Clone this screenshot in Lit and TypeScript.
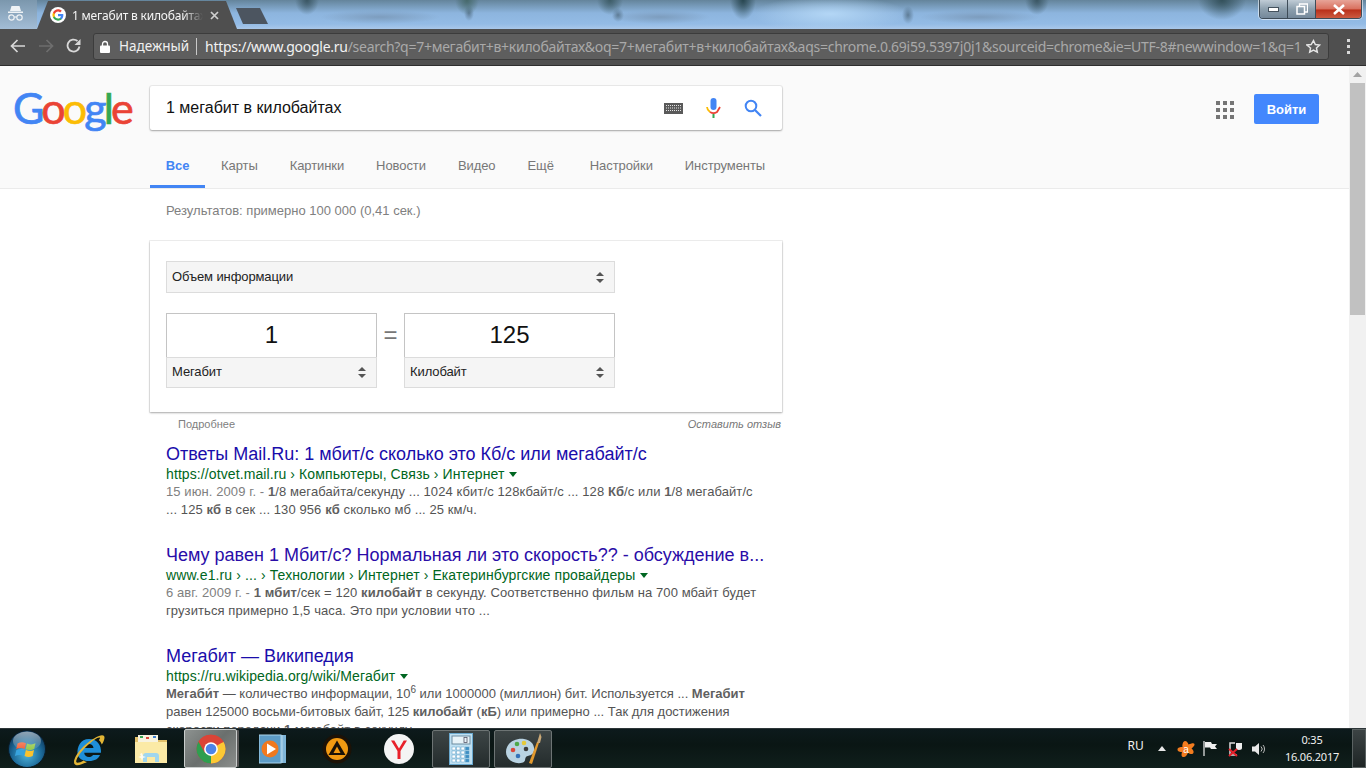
import { LitElement, css, html, svg } from 'lit';
import { customElement } from 'lit/decorators.js';

const updown = html`<svg class="updown" width="10" height="13" viewBox="0 0 10 13"><path d="M5 1 9 5H1zM1 8h8l-4 4z" fill="#555"/></svg>`;
const arrow = html`<span class="drop"></span>`;

const gIcon = html`<svg width="16" height="16" viewBox="0 0 48 48">
  <circle cx="24" cy="24" r="24" fill="#fff"/>
  <path d="M40 24.5c0-1.2-.1-2.3-.3-3.4H24v6.5h9a7.700 7.700 0 0 1-3.300 5v4.200h5.400c3.100-2.900 4.900-7.100 4.900-12.300z" fill="#4285f4"/>
  <path d="M24 41c4.500 0 8.300-1.500 11.100-4.000l-5.400-4.200c-1.500 1-3.400 1.600-5.700 1.600-4.400 0-8.100-3-9.400-6.900H9v4.300C11.800 37 17.400 41 24 41z" fill="#34a853"/>
  <path d="M14.600 27.500a10 10 0 0 1 0-6.500v-4.300H9a17 17 0 0 0 0 15.100z" fill="#fbbc05"/>
  <path d="M24 13.700c2.500 0 4.700.9 6.500 2.500l4.800-4.800C32.300 8.700 28.500 7 24 7c-6.600 0-12.200 4-15 9.700l5.600 4.300c1.300-4 5-7.300 9.400-7.300z" fill="#ea4335"/>
</svg>`;

const chromeIcon = (size: number) => html`<svg width=${size} height=${size} viewBox="0 0 48 48">
  <circle cx="24" cy="24" r="23" fill="#db4437"/>
  <path d="M24 24 44 12.500A23 23 0 0 1 24 47z" fill="#fcc934"/>
  <path d="M24 24 24 47A23 23 0 0 1 4 12.500z" fill="#2e9e4f"/>
  <path d="M24 13H44A23 23 0 0 0 4 12.500L14 30z" fill="#db4437"/>
  <circle cx="24" cy="24" r="11" fill="#fff"/>
  <circle cx="24" cy="24" r="8.500" fill="#4d84e8"/>
</svg>`;

const orb = html`<svg width="38" height="38" viewBox="0 0 38 38">
  <defs>
    <radialGradient id="orbg" cx="50%" cy="65%" r="60%"><stop offset="0" stop-color="#4fb4dc"/><stop offset=".65" stop-color="#1c6a99"/><stop offset="1" stop-color="#0d3a5e"/></radialGradient>
    <linearGradient id="orbs" x1="0" y1="0" x2="0" y2="1"><stop offset="0" stop-color="#fff" stop-opacity=".55"/><stop offset="1" stop-color="#fff" stop-opacity=".05"/></linearGradient>
  </defs>
  <circle cx="19" cy="19" r="18.500" fill="url(#orbg)" stroke="#0a1c28"/>
  <path d="M9.500 13.500c3-1.500 5.500-1.500 8.500-.3l-1.300 5.800c-3-1.200-5.500-1.200-8.500.2z" fill="#f0572c"/>
  <path d="M19 13.500c3 1.200 5.500 1.200 8.500-.2l-1.300 5.800c-3 1.400-5.500 1.300-8.500.2z" fill="#8ec63f"/>
  <path d="M8.400 20c3-1.400 5.500-1.400 8.400-.2l-1.300 6c-3-1.200-5.600-1.200-8.600.2z" fill="#38a3dd"/>
  <path d="M17.900 20.100c3 1.100 5.500 1.200 8.100-.1l-1.300 6c-2.700 1.300-5.200 1.300-8.100.1z" fill="#fcc22d"/>
  <ellipse cx="19" cy="11" rx="14" ry="9.500" fill="url(#orbs)"/>
</svg>`;

const ie = html`<svg width="34" height="36" viewBox="0 0 34 36">
  <path d="M17 8C8.500 8 5 16 5.500 22.500c.4 5 5 7.500 11.500 7.500 6 0 9.500-2.300 11-6h-7c-1 1.400-2.500 2-4 2-2.700 0-4.700-1.700-4.800-4.200H29c.5-8-4-13.800-12-13.800zm-4.800 9c.3-2.300 2.300-3.900 4.700-3.900 2.500 0 4.400 1.600 4.600 3.900z" fill="#1f8fd8"/>
  <path d="M2.500 33C-.5 28 12 11 27 5c3-1.200 5.500-1 5.500 1.500 0 2-1 4.500-2.700 7-.7-2-1.500-3-3-4.500 1-1 1.500-2 1-2.500C25 5 8 19 4.500 29c-.6 1.700-.4 2.600 1 2.700 1.600 0 4-1 6-2.300 1 .7 2 1.200 3.500 1.500C9 34 4.500 35.500 2.500 33z" fill="#e2b535"/>
</svg>`;

const folder = html`<svg width="34" height="32" viewBox="0 0 34 32">
  <path d="M1 4h13l2 3h17v22H1z" fill="#e2c06a"/>
  <rect x="4" y="2" width="20" height="8" fill="#f7f3e0"/>
  <rect x="6" y="3" width="3" height="2" fill="#3aa655"/><rect x="12" y="4" width="3" height="2" fill="#d9483b"/><rect x="19" y="3" width="3" height="2" fill="#3f7fd0"/>
  <path d="M1 9h32v21H1z" fill="#fbeaa6"/>
  <path d="M9 29v-6c0-2 1-3 3-3h10c2 0 3 1 3 3v6h-4v-5h-8v5z" fill="#9fd6ee"/>
  <path d="M6 21l2-1 1 3 3 1-3 1-1 3-1-3-3-1 3-1z" fill="#fff" opacity=".8"/>
</svg>`;

const wmp = html`<svg width="28" height="32" viewBox="0 0 28 32">
  <rect x="6" y="2" width="21" height="28" fill="#7fb5d8"/>
  <rect x="3" y="2" width="21" height="28" fill="#9cc7e2"/>
  <rect x="0" y="2" width="22" height="28" fill="#5d9cc7" stroke="#a9d3ec"/>
  <circle cx="11" cy="16" r="8.500" fill="#f0791f"/>
  <path d="M8 10.500 17 16l-9 5.500z" fill="#fff"/>
</svg>`;

const aimp = html`<svg width="30" height="30" viewBox="0 0 30 30">
  <circle cx="15" cy="15" r="14.500" fill="#1d1206"/>
  <circle cx="15" cy="15" r="11" fill="#f29a12"/>
  <path d="M15 6.500 23.500 21h-17z" fill="#1a1208"/>
  <path d="M15 12.500 18.500 19h-7z" fill="#f29a12"/>
</svg>`;

const yandex = html`<svg width="30" height="30" viewBox="0 0 30 30">
  <circle cx="15" cy="15" r="15" fill="#f4f4f4"/>
  <path d="M13.500 25V17L7 6.500h3.300L15 14.500l4.700-8H23L16.500 17v8z" fill="#e8202a"/>
</svg>`;

const calc = html`<svg width="24" height="32" viewBox="0 0 24 32">
  <rect x=".5" y=".5" width="23" height="31" fill="#bfe0f2" stroke="#6aa9cf"/>
  <rect x="3" y="3" width="18" height="8" fill="#e8f3f8" stroke="#6d8ca0"/>
  <rect x="15" y="4.500" width="3" height="5" fill="none" stroke="#556" stroke-width=".8"/>
  ${[14, 18, 22, 26].map(y => [3, 7.500, 12, 16.500].map(x => svg`<rect x=${x} y=${y} width="3.500" height="3" fill=${x === 16.5 ? '#3d8fc4' : '#fff'} stroke="#5e9fc8" stroke-width=".5"/>`))}
</svg>`;

const palette = html`<svg width="38" height="34" viewBox="0 0 38 34">
  <path d="M2 20C2 11 11 6 20 7c7 .8 11 6 10 12-.8 5-6 4-8 6-1.500 2 0 4-3 5.500C11 33 2 28 2 20z" fill="#b9d3e2"/>
  <circle cx="9" cy="18" r="2.300" fill="#d9483b"/><circle cx="13" cy="12" r="2.300" fill="#4ea84a"/><circle cx="20" cy="11" r="2.300" fill="#e5c93a"/><circle cx="14" cy="24" r="2.300" fill="#3572b8"/><circle cx="22" cy="17" r="2.300" fill="#3c3c3c"/>
  <path d="M25 31 33 10l2 .8L28 32z" fill="#e39a2f"/>
  <path d="M33 11 36 1l1.500 4-1.500 6z" fill="#c9a877"/>
</svg>`;

const avast = html`<svg width="18" height="18" viewBox="0 0 18 18">
  <path d="M8 1c2 0 3 2 3.500 3.500C14 3.500 17 2.500 17.500 4c.4 1.500-1.500 3-3 4.500 1.500 1 3 3.500 1.500 5-1.500 1.300-3.500 0-5-.8C10 15 8.500 17.500 6 17c-2-.5-1.500-3-1-5C3 12 .5 11.500.5 9.500S3.500 7 5.500 7C5 5 6 1 8 1z" fill="#f37c1f"/>
  <text x="6.200" y="12.500" font-size="10" font-family="Liberation Sans, sans-serif" fill="#fff">a</text>
</svg>`;

@customElement('app-root')
export class AppRoot extends LitElement {
  static styles = css`
    :host {
      display: flex;
      flex-direction: column;
      width: 1366px;
      height: 768px;
      overflow: hidden;
      font-family: 'Liberation Sans', Arial, sans-serif;
      background: #fff;
    }

    /* window strip, blurred desktop behind it */
    .strip {
      height: 29px;
      flex: none;
      display: flex;
      background:
        radial-gradient(ellipse 12px 15px at 307px 0, #3a5663 0, transparent 100%),
        radial-gradient(ellipse 12px 15px at 467px 0, #46696b 0, transparent 100%),
        radial-gradient(ellipse 5px 8px at 469px 13px, rgba(74, 100, 120, 0.7) 0, transparent 100%),
        radial-gradient(ellipse 13px 15px at 610px 0, #3d5c67 0, transparent 100%),
        radial-gradient(ellipse 6px 7px at 618px 15px, rgba(74, 100, 120, 0.7) 0, transparent 100%),
        radial-gradient(ellipse 13px 20px at 743px 0, #284650 0, transparent 100%),
        radial-gradient(ellipse 6px 9px at 908px 15px, rgba(74, 100, 120, 0.7) 0, transparent 100%),
        radial-gradient(ellipse 12px 15px at 1037px 0, #3a5663 0, transparent 100%),
        radial-gradient(ellipse 24px 20px at 1222px 0, #33505a 0, transparent 100%),
        radial-gradient(ellipse 78px 18px at 830px 14px, #b3d6f5 0, transparent 100%),
        radial-gradient(ellipse 60px 7px at 380px 17px, #7d9dbe 0, transparent 100%),
        radial-gradient(ellipse 50px 7px at 660px 17px, #7d9dbe 0, transparent 100%),
        radial-gradient(ellipse 60px 7px at 980px 17px, #7d9dbe 0, transparent 100%),
        linear-gradient(#64849b, #8db5de 45%, #93bbe5 82%, #a9c8ea);
    }
    .incog {
      width: 37px;
      padding: 5px 0 0 7px;
      box-sizing: border-box;
      background: linear-gradient(#7b97ad, #a3bdd6);
    }
    .tab {
      width: 200px;
      height: 28px;
      margin-top: 1px;
      display: flex;
      align-items: center;
      padding-left: 13px;
      box-sizing: border-box;
      background: #4f4f4f;
      clip-path: polygon(11px 0, 189px 0, 200px 100%, 0 100%);
      color: #f4f4f4;
      font-size: 12px;
      font-family: 'Noto Sans', 'Liberation Sans', sans-serif;
    }
    .tab-title {
      width: 131px;
      margin-left: 6px;
      white-space: nowrap;
      overflow: hidden;
      letter-spacing: -0.2px;
      mask-image: linear-gradient(90deg, #000 85%, transparent);
    }
    .tab-x {
      margin-left: 7px;
      display: flex;
    }
    .newtab {
      width: 33px;
      height: 16px;
      margin: 8px 0 0 -1px;
      background: #4c5560;
      clip-path: polygon(0 0, 24px 0, 32px 100%, 7px 100%);
    }
    .winbtns {
      display: flex;
      margin-left: auto;
      margin-right: 4px;
      height: 18px;
      border: 1px solid #3e4c58;
      border-top: 0;
      border-radius: 0 0 4px 4px;
      box-shadow: 0 0 0 1px rgba(255, 255, 255, 0.55);
      overflow: hidden;
    }
    .wb {
      width: 27px;
      display: flex;
      align-items: center;
      justify-content: center;
      background: linear-gradient(#c0ccd6, #8da0ae 50%, #74889a);
      border-right: 1px solid #3e4c58;
    }
    .wb.close {
      width: 45px;
      border: 0;
      background: linear-gradient(#e7a498, #d9705e 50%, #b9301a 55%, #cc5a40);
    }

    /* toolbar */
    .toolbar {
      height: 37px;
      flex: none;
      box-sizing: border-box;
      display: flex;
      align-items: center;
      padding: 0 0 2px 10px;
      background: #4f4f4f;
      border-bottom: 1px solid #2e2e2e;
    }
    .nav {
      width: 28px;
      display: flex;
      justify-content: flex-start;
    }
    .omni {
      width: 1236px;
      height: 27px;
      margin-left: -1px;
      box-sizing: border-box;
      display: flex;
      align-items: center;
      background: #5e5e5e;
      border: 1px solid #3c3c3c;
      border-radius: 3px;
      font-family: 'Noto Sans', 'Liberation Sans', sans-serif;
      font-size: 14px;
      color: #a9a9a9;
    }
    .lock {
      margin: 0 9px 0 6px;
      display: flex;
    }
    .secure {
      width: 68px;
      color: #f0f0f0;
      font-size: 13.500px;
      white-space: nowrap;
    }
    .sep {
      width: 1px;
      height: 17px;
      margin: 0 8px 0 9px;
      background: #c9c9c9;
    }
    .url {
      width: 1097px;
      white-space: nowrap;
      letter-spacing: -0.27px;
    }
    .url b {
      font-weight: 400;
      color: #f2f2f2;
    }
    .star {
      margin-left: 4px;
      display: flex;
    }
    .dots {
      margin-left: 18px;
      display: grid;
      gap: 3px;
    }
    .dots i {
      width: 3px;
      height: 3px;
      background: #d8d8d8;
    }

    /* page */
    .view {
      flex: 1;
      min-height: 0;
      display: flex;
    }
    .page {
      width: 1349px;
      overflow: hidden;
    }
    .scroll {
      width: 17px;
      background: #f1f1f1;
      display: flex;
      flex-direction: column;
      align-items: center;
    }
    .scroll-up {
      height: 17px;
      display: flex;
      align-items: center;
    }
    .thumb {
      width: 15px;
      height: 232px;
      background: #c1c1c1;
    }
    .head {
      height: 123px;
      box-sizing: border-box;
      background: #fafafa;
      border-bottom: 1px solid #ebebeb;
      display: flex;
      flex-direction: column;
    }
    .head-top {
      display: flex;
      padding-top: 20px;
    }
    .logo {
      width: 149px;
      height: 44px;
      flex: none;
      padding-left: 13px;
      box-sizing: border-box;
      font-family: Lato, sans-serif;
      font-size: 43px;
      line-height: 43px;
      letter-spacing: -2.850px;
      white-space: nowrap;
      -webkit-text-stroke: 0.7px currentColor;
    }
    .logo .b { color: #4285f4; }
    .logo .r { color: #ea4335; }
    .logo .y { color: #fbbc05; }
    .logo .g { color: #34a853; }
    .search {
      width: 632px;
      height: 44px;
      margin-left: 1px;
      flex: none;
      box-sizing: border-box;
      display: flex;
      align-items: center;
      padding: 0 20px 0 16px;
      background: #fff;
      border-radius: 2px;
      box-shadow: 0 1px 2px rgba(0, 0, 0, 0.3), 0 0 0 1px rgba(0, 0, 0, 0.06);
      font-size: 16px;
      color: #111;
    }
    .search-text {
      flex: 1;
    }
    .search-icons {
      display: flex;
      align-items: center;
      gap: 23px;
    }
    .apps {
      margin-left: 434px;
      margin-top: 15px;
      display: grid;
      grid-template-columns: repeat(3, 4px);
      gap: 3px;
      height: 18px;
    }
    .apps i {
      width: 4px;
      height: 4px;
      background: #757575;
    }
    .login {
      width: 65px;
      height: 30px;
      margin: 8px 0 0 20px;
      display: flex;
      align-items: center;
      justify-content: center;
      background: #4387fd;
      border-radius: 2px;
      color: #fff;
      font-size: 13px;
      font-weight: 700;
    }
    .tabs {
      display: flex;
      margin: 13px 0 0 150px;
      font-size: 13px;
      letter-spacing: -0.08px;
      color: #777;
    }
    .tabs span {
      padding: 15px 16px 14px;
      height: 16px;
      line-height: 16px;
    }
    .tabs .on {
      width: 55px;
      box-sizing: border-box;
      text-align: center;
      padding: 15px 0 11px;
      color: #4285f4;
      font-weight: 700;
      height: 45px;
      border-bottom: 3px solid #4285f4;
    }
    .tabs .set {
      margin-left: 4px;
    }
    .body {
      padding: 14px 0 0 166px;
    }
    .stats {
      font-size: 13px;
      line-height: 16px;
      color: #808080;
    }
    .card {
      width: 632px;
      height: 171px;
      margin: 22px 0 0 -16px;
      box-sizing: border-box;
      padding: 20px 16px;
      background: #fff;
      box-shadow: 0 1px 2px rgba(0, 0, 0, 0.3), 0 0 0 1px rgba(0, 0, 0, 0.06);
    }
    .sel {
      height: 32px;
      box-sizing: border-box;
      display: flex;
      align-items: center;
      justify-content: space-between;
      padding: 0 9px 0 5px;
      background: #f5f5f5;
      border: 1px solid #dcdcdc;
      font-size: 13px;
      letter-spacing: -0.1px;
      color: #222;
    }
    .main-sel span {
      margin-top: -2px;
    }
    .unit .sel {
      height: 31px;
    }
    .unit .sel span {
      margin-top: -2px;
    }
    .main-sel {
      width: 449px;
    }
    .conv {
      display: flex;
      align-items: center;
      margin-top: 20px;
      width: 449px;
    }
    .unit {
      width: 211px;
    }
    .val {
      height: 44px;
      box-sizing: border-box;
      display: flex;
      align-items: center;
      justify-content: center;
      padding-bottom: 2px;
      border: 1px solid #c4c4c4;
      border-bottom: 0;
      font-size: 24px;
      color: #111;
    }
    .eq {
      width: 27px;
      text-align: center;
      font-size: 24px;
      color: #777;
      margin-bottom: 32px;
    }
    .foot {
      width: 615px;
      display: flex;
      justify-content: space-between;
      padding: 5px 0 0 12px;
      box-sizing: border-box;
      font-size: 11px;
      line-height: 14px;
      color: #808080;
    }
    .foot em {
      color: #777;
    }
    .results {
      padding-top: 13px;
    }
    .res {
      width: 610px;
      height: 101px;
      white-space: nowrap;
    }
    .res h3 {
      margin: 0;
      font-size: 18px;
      font-weight: 400;
      line-height: 21px;
      color: #1a0dab;
    }
    .res h3.seen {
      color: #2a0da8;
    }
    .res .link {
      font-size: 14px;
      line-height: 18px;
      letter-spacing: 0.1px;
      color: #006621;
    }
    .res p {
      margin: 0;
      font-size: 13px;
      line-height: 18px;
      letter-spacing: 0.09px;
      color: #545454;
    }
    .res p.tight {
      letter-spacing: 0;
    }
    .res p b {
      color: #5f5f5f;
    }
    .res p .date {
      color: #808080;
    }
    .res sup {
      font-size: 10px;
      line-height: 0;
    }
    .drop {
      display: inline-block;
      margin: 0 0 2px 1px;
      border-top: 5px solid #006621;
      border-left: 4px solid transparent;
      border-right: 4px solid transparent;
    }

    /* taskbar */
    .taskbar {
      height: 40px;
      flex: none;
      box-sizing: border-box;
      display: flex;
      align-items: center;
      background: linear-gradient(#0d1a1c, #0a1614 40%, #101f1c);
      border-top: 1px solid #2d3538;
      color: #f0f0f0;
    }
    .start {
      width: 58px;
      display: flex;
      justify-content: center;
      padding-right: 4px;
      box-sizing: border-box;
    }
    .ti {
      width: 62px;
      height: 38px;
      display: flex;
      align-items: center;
      justify-content: center;
      flex: none;
      box-sizing: border-box;
    }
    .ti.wmp { width: 60px; }
    .ti.aimp { width: 68px; }
    .ti.ya { width: 56px; margin-right: 5px; }
    .ti.chrome {
      width: 53px;
      height: 39px;
      margin: 0 6px 0 2px;
      background: linear-gradient(135deg, #8d9290, #6a6f6d 50%, #8b8e8c);
      border: 1px solid #c9cdcc;
      border-radius: 2px;
      box-shadow: 3px 0 0 -1px #555;
    }
    .ti.run {
      width: 58px;
      margin-right: 4px;
      background: linear-gradient(#3d4546, #242c2c);
      border: 1px solid #6d7474;
      border-radius: 2px;
    }
    .tray {
      margin-left: auto;
      display: flex;
      align-items: center;
      height: 39px;
      font-family: 'Noto Sans', 'Liberation Sans', sans-serif;
      font-size: 12px;
    }
    .lang {
      width: 22px;
      padding-bottom: 6px;
    }
    .tray-ic {
      width: 24.500px;
      display: flex;
      justify-content: center;
    }
    .clock {
      width: 66px;
      margin-left: 7px;
      text-align: center;
      font-size: 11px;
      letter-spacing: -0.2px;
      line-height: 17px;
      padding-bottom: 1px;
      white-space: nowrap;
    }
    .desk {
      width: 14px;
      height: 39px;
      margin-left: 7px;
      box-sizing: border-box;
      background: linear-gradient(#3c4344, #1e2525);
      border: 1px solid #5a6262;
    }
  `;

  render() {
    return html`
      <div class="strip">
        <div class="incog">
          <svg width="17" height="18" viewBox="0 0 17 18">
            <path d="M4.500 1h8l1.500 5H3zM1 6.500h15V8H1z" fill="#eef2f5"/>
            <g fill="none" stroke="#eef2f5" stroke-width="1.200"><circle cx="4.500" cy="12.500" r="2.700"/><circle cx="12.500" cy="12.500" r="2.700"/><path d="M7.200 12h2.600"/></g>
          </svg>
        </div>
        <div class="tab">
          ${gIcon}
          <span class="tab-title">1 мегабит в килобайтах</span>
          <span class="tab-x"><svg width="9" height="9" viewBox="0 0 9 9"><path d="M1 1l7 7M8 1 1 8" stroke="#cfcfcf" stroke-width="1.700"/></svg></span>
        </div>
        <div class="newtab"></div>
        <div class="winbtns">
          <div class="wb"><svg width="11" height="5" viewBox="0 0 11 5"><rect x=".5" y=".5" width="10" height="4" fill="#fff" stroke="#44525e"/></svg></div>
          <div class="wb"><svg width="12" height="12" viewBox="0 0 12 12"><path d="M3.500 3V1h8v8H9" fill="none" stroke="#fff" stroke-width="1.300"/><rect x="1" y="3.500" width="7.500" height="7.500" fill="none" stroke="#fff" stroke-width="1.500"/></svg></div>
          <div class="wb close"><svg width="14" height="11" viewBox="0 0 14 11"><path d="M2 1l10 9M12 1 2 10" stroke="#fff" stroke-width="2.600"/></svg></div>
        </div>
      </div>
      <div class="toolbar">
        <span class="nav"><svg width="16" height="14" viewBox="0 0 16 14"><path d="M15 7H2M7.500 1 1.500 7l6 6" fill="none" stroke="#d8d8d8" stroke-width="1.700"/></svg></span>
        <span class="nav"><svg width="16" height="14" viewBox="0 0 16 14"><path d="M1 7h13M8.500 1l6 6-6 6" fill="none" stroke="#6e6e6e" stroke-width="1.700"/></svg></span>
        <span class="nav"><svg width="16" height="16" viewBox="0 0 16 16"><path d="M13.500 8.500A6 6 0 1 1 11.500 3" fill="none" stroke="#d8d8d8" stroke-width="1.800"/><path d="M14.500 1v6h-6z" fill="#d8d8d8"/></svg></span>
        <div class="omni">
          <span class="lock"><svg width="10" height="13" viewBox="0 0 10 13"><path d="M2.500 6V4a2.500 2.500 0 0 1 5 0v2" fill="none" stroke="#fff" stroke-width="1.300"/><rect y="5.500" width="10" height="7.500" rx="1" fill="#fff"/></svg></span>
          <span class="secure">Надежный</span>
          <span class="sep"></span>
          <span class="url"><b>https://www.google.ru</b>/search?q=7+мегабит+в+килобайтах&oq=7+мегабит+в+килобайтах&aqs=chrome.0.69i59.5397j0j1&sourceid=chrome&ie=UTF-8#newwindow=1&q=1</span>
          <span class="star"><svg width="15" height="15" viewBox="0 0 24 24"><path d="M12 2.500l2.900 6.300 6.900.8-5.100 4.700 1.400 6.800-6.100-3.400-6.100 3.400 1.400-6.800L1.300 9.600l6.900-.8z" fill="none" stroke="#e6e6e6" stroke-width="2.300"/></svg></span>
        </div>
        <span class="dots"><i></i><i></i><i></i></span>
      </div>
      <div class="view">
        <div class="page">
          <div class="head">
            <div class="head-top">
              <div class="logo"><span class="b">G</span><span class="r">o</span><span class="y">o</span><span class="b">g</span><span class="g">l</span><span class="r">e</span></div>
              <div class="search">
                <span class="search-text">1 мегабит в килобайтах</span>
                <span class="search-icons">
                  <svg width="19" height="11" viewBox="0 0 19 11"><rect width="19" height="11" fill="#5a5a5a"/><path d="M2 2.500h15M2 5h15M2 7.500h15" stroke="#e4e4e4" stroke-dasharray="1 1"/></svg>
                  <svg width="15" height="20" viewBox="0 0 15 20">
                    <rect x="4.500" y="0" width="6" height="12" rx="3" fill="#4285f4"/>
                    <path d="M1 9a6.500 6.500 0 0 0 3 5" fill="none" stroke="#fbbc05" stroke-width="1.800"/>
                    <path d="M4 14a6.500 6.500 0 0 0 7 0l3-5" fill="none" stroke="#ea4335" stroke-width="1.800"/>
                    <rect x="6.500" y="16" width="2" height="4" fill="#34a853"/>
                  </svg>
                  <svg width="18" height="18" viewBox="0 0 18 18"><circle cx="7" cy="7" r="5.300" fill="none" stroke="#4285f4" stroke-width="2"/><path d="M11 11l6 6" stroke="#4285f4" stroke-width="2.200"/></svg>
                </span>
              </div>
              <div class="apps">${[...Array(9)].map(() => html`<i></i>`)}</div>
              <div class="login">Войти</div>
            </div>
            <div class="tabs">
              <span class="on">Все</span>
              <span>Карты</span><span>Картинки</span><span>Новости</span><span>Видео</span><span>Ещё</span>
              <span class="set">Настройки</span><span>Инструменты</span>
            </div>
          </div>
          <div class="body">
            <div class="stats">Результатов: примерно 100 000 (0,41 сек.)</div>
            <div class="card">
              <div class="sel main-sel"><span>Объем информации</span>${updown}</div>
              <div class="conv">
                <div class="unit"><div class="val">1</div><div class="sel"><span>Мегабит</span>${updown}</div></div>
                <div class="eq">=</div>
                <div class="unit"><div class="val">125</div><div class="sel"><span>Килобайт</span>${updown}</div></div>
              </div>
            </div>
            <div class="foot"><span>Подробнее</span><em>Оставить отзыв</em></div>
            <div class="results">
              <div class="res">
                <h3>Ответы Mail.Ru: 1 мбит/с сколько это Кб/с или мегабайт/с</h3>
                <div class="link">https://otvet.mail.ru › Компьютеры, Связь › Интернет ${arrow}</div>
                <p><span class="date">15 июн. 2009 г. - </span><b>1</b>/8 мегабайта/секунду ... 1024 кбит/с 128кбайт/с ... 128 <b>Кб</b>/с или <b>1</b>/8 мегабайт/с<br>... 125 <b>кб</b> в сек ... 130 956 <b>кб</b> сколько мб ... 25 км/ч.</p>
              </div>
              <div class="res">
                <h3 class="seen">Чему равен 1 Мбит/с? Нормальная ли это скорость?? - обсуждение в...</h3>
                <div class="link">www.e1.ru › ... › Технологии › Интернет › Екатеринбургские провайдеры ${arrow}</div>
                <p><span class="date">6 авг. 2009 г. - </span><b>1 мбит</b>/сек = 120 <b>килобайт</b> в секунду. Соответственно фильм на 700 мбайт будет<br>грузиться примерно 1,5 часа. Это при условии что ...</p>
              </div>
              <div class="res">
                <h3>Мегабит — Википедия</h3>
                <div class="link">https://ru.wikipedia.org/wiki/Мегабит ${arrow}</div>
                <p class="tight"><b>Мегаби́т</b> — количество информации, 10<sup>6</sup> или 1000000 (миллион) бит. Используется ... <b>Мегабит</b><br>равен 125000 восьми-битовых байт, 125 <b>килобайт</b> (<b>кБ</b>) или примерно ... Так для достижения<br>скорости передачи <b>1</b> мегабайт в секунду</p>
              </div>
            </div>
          </div>
        </div>
        <div class="scroll">
          <div class="scroll-up"><svg width="9" height="5" viewBox="0 0 9 5"><path d="M4.500 0 9 5H0z" fill="#a3a3a3"/></svg></div>
          <div class="thumb"></div>
        </div>
      </div>
      <div class="taskbar">
        <div class="start">${orb}</div>
        <div class="ti">${ie}</div>
        <div class="ti">${folder}</div>
        <div class="ti chrome">${chromeIcon(30)}</div>
        <div class="ti wmp">${wmp}</div>
        <div class="ti aimp">${aimp}</div>
        <div class="ti ya">${yandex}</div>
        <div class="ti run">${calc}</div>
        <div class="ti run">${palette}</div>
        <div class="tray">
          <span class="lang">RU</span>
          <span class="tray-ic"><svg width="8" height="5" viewBox="0 0 8 5"><path d="M4 0l4 5H0z" fill="#e8e8e8"/></svg></span>
          <span class="tray-ic">${avast}</span>
          <span class="tray-ic"><svg width="15" height="15" viewBox="0 0 15 15"><path d="M1 0v15" stroke="#eee" stroke-width="1.200"/><path d="M2 1h6l1 2h5l-2 2.500L14 8H8L7 6.500H2z" fill="#eee"/></svg></span>
          <span class="tray-ic"><svg width="16" height="17" viewBox="0 0 16 17"><path d="M8 3H3v12h7" fill="none" stroke="#ddd" stroke-width="1.500"/><path d="M9 3h6v5c0 1-1 2-3 2s-3-1-3-2z" fill="#eee"/><path d="M2 9l8 7M10 9 2 16" stroke="#e3202a" stroke-width="2"/></svg></span>
          <span class="tray-ic"><svg width="15" height="14" viewBox="0 0 15 14"><path d="M0 4.500h3L7 1v12L3 9.500H0z" fill="#e8e8e8"/><path d="M9 4.500a3.500 3.500 0 0 1 0 5M11 3a6 6 0 0 1 0 8" fill="none" stroke="#bbb" stroke-width="1"/></svg></span>
          <div class="clock">0:35<br>16.06.2017</div>
          <div class="desk"></div>
        </div>
      </div>
    `;
  }
}
